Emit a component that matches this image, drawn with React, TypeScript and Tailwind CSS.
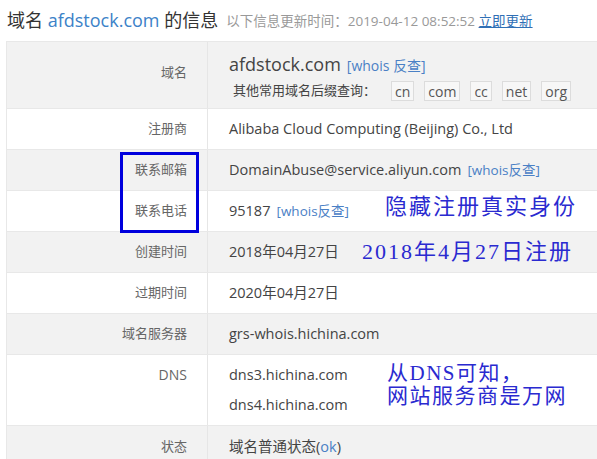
const sans = 'font-["Open_Sans","Noto_Sans_CJK_SC",sans-serif]'
const serif = 'font-["Liberation_Serif","Noto_Sans_CJK_SC",serif]'

type Row = { label: string; value: React.ReactNode; gray?: boolean }

function Whois({ space = false }: { space?: boolean }) {
  return <span className={`ml-1.5 text-[#4a80c5] ${space ? 'text-[14px]' : 'text-[13.5px]'}`}>[whois{space ? ' ' : ''}反查]</span>
}

const ROWS: Row[] = [
  { label: '注册商', value: 'Alibaba Cloud Computing (Beijing) Co., Ltd' },
  { label: '联系邮箱', value: <>DomainAbuse@service.aliyun.com<Whois /></>, gray: true },
  { label: '联系电话', value: <>95187<Whois /></> },
  { label: '创建时间', value: '2018年04月27日', gray: true },
  { label: '过期时间', value: '2020年04月27日' },
  { label: '域名服务器', value: 'grs-whois.hichina.com', gray: true },
]

const TLDS = ['cn', 'com', 'cc', 'net', 'org']

export default function App() {
  return (
    <div className={`relative h-[459px] w-[597px] overflow-hidden bg-white text-[#333] ${sans}`}>
      <div className="flex h-[41px] items-center pl-[7px] pb-[1px]">
        <span className="text-[18px]">域名 <span className="text-[#3c82c8]">afdstock.com</span> 的信息</span>
        <span className="ml-2 mt-[2px] text-[13.5px] text-[#999]">
          以下信息更新时间：2019-04-12 08:52:52 <span className="text-[#2f6fb5] underline">立即更新</span>
        </span>
      </div>

      <div className="ml-[6px] w-[620px] border-l border-t border-[#e8e8e8]">
        <div className="flex h-[67px] border-b border-[#e8e8e8] bg-[#f2f2f2]">
          <div className="flex w-[201px] shrink-0 items-center justify-end border-r border-[#e6e6e6] pr-[20px] pb-[4px] text-[13px] text-[#666]">域名</div>
          <div className="flex flex-col pl-[21px] pt-[9px]">
            <div className="flex items-baseline">
              <span className="text-[18px] text-[#444]">afdstock.com</span>
              <Whois space />
            </div>
            <div className="mt-[3px] flex items-center pl-[4px] text-[13px] text-[#444]">
              <span className="mr-[15px]">其他常用域名后缀查询：</span>
              {TLDS.map((t) => (
                <span key={t} className="mr-[10px] flex h-[20px] items-center border border-[#dcdcdc] bg-[#f7f7f7] px-[3px] text-[14px] text-[#555]">
                  {t}
                </span>
              ))}
            </div>
          </div>
        </div>

        {ROWS.map((r) => (
          <div key={r.label} className={`flex h-[41px] border-b border-[#e8e8e8] ${r.gray ? 'bg-[#f2f2f2]' : 'bg-white'}`}>
            <div className="flex w-[201px] shrink-0 items-center justify-end border-r border-[#e6e6e6] pr-[20px] text-[13px] text-[#666]">{r.label}</div>
            <div className="flex items-center pl-[21px] text-[14.5px] text-[#444]">{r.value}</div>
          </div>
        ))}

        <div className="flex h-[71px] border-b border-[#e8e8e8] bg-white">
          <div className="flex w-[201px] shrink-0 items-start justify-end border-r border-[#e6e6e6] pt-[9px] pr-[20px] text-[14px] text-[#666]">DNS</div>
          <div className="flex flex-col pl-[21px] pt-[5px] text-[14.5px] leading-[30px] text-[#444]">
            <span>dns3.hichina.com</span>
            <span>dns4.hichina.com</span>
          </div>
        </div>

        <div className="flex h-[41px] bg-[#f2f2f2]">
          <div className="flex w-[201px] shrink-0 items-center justify-end border-r border-[#e6e6e6] pr-[20px] text-[13px] text-[#666]">状态</div>
          <div className="flex items-center pl-[21px] text-[14.5px] text-[#444]">
            域名普通状态(<span className="text-[#4a80c5]">ok</span>)
          </div>
        </div>
      </div>

      {/* annotations drawn over the screenshot */}
      <div className="absolute left-[120px] top-[152px] h-[81px] w-[79px] border-[3px] border-[#0000dd]" />
      <div className={`absolute left-[385px] top-[193px] text-[22px] leading-[28px] tracking-[2px] text-[#2a2ad0] ${serif}`}>隐藏注册真实身份</div>
      <div className={`absolute left-[362px] top-[238px] text-[22px] leading-[28px] tracking-[2px] text-[#2a2ad0] ${serif}`}>2018年4月27日注册</div>
      <div className={`absolute left-[387px] top-[362px] text-[21px] leading-[23px] tracking-[1.5px] text-[#2a2ad0] ${serif}`}>
        从DNS可知，<br />网站服务商是万网
      </div>
    </div>
  )
}
